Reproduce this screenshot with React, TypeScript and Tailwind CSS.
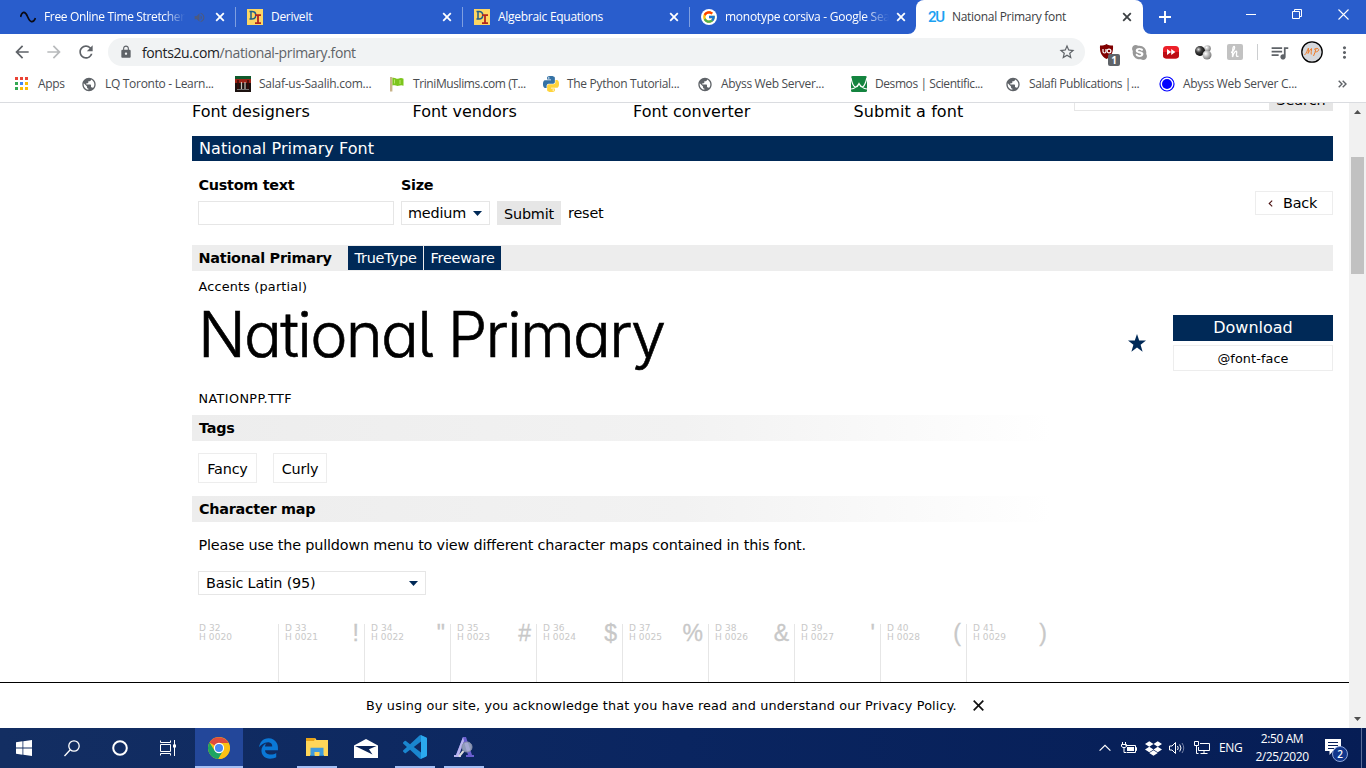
import React from "react";
import { FcGoogle } from "react-icons/fc";
import {
  MdPublic,
  MdQueueMusic,
  MdMoreVert,
  MdStarBorder,
  MdRefresh,
  MdArrowBack,
  MdArrowForward,
  MdLock,
  MdVolumeUp,
} from "react-icons/md";
import { FaDropbox, FaEdgeLegacy, FaSkype } from "react-icons/fa";

/* ---------- favicons and browser icons ---------- */

function CloseX({ dark = false }: { dark?: boolean }) {
  return (
    <svg width="10" height="10" viewBox="0 0 10 10" className="shrink-0">
      <path d="M1.2 1.2l7.6 7.6M8.8 1.2L1.2 8.8" stroke={dark ? "#3c4043" : "#fff"} strokeWidth="1.8" />
    </svg>
  );
}

function Wave() {
  return (
    <svg width="16" height="16" viewBox="0 0 16 16">
      <path d="M.5 8C2 2.500 5 1.500 7.500 7.500S13 14.500 15.500 9" fill="none" stroke="#0a0a14" strokeWidth="1.700" />
    </svg>
  );
}

function DeriveIcon() {
  return (
    <svg width="16" height="16" viewBox="0 0 16 16">
      <rect width="16" height="16" fill="#fdd663" />
      <path d="M2.500 2.500h2.500c5 0 5 7.500 0 7.500H2.500M4 2.500V10" fill="none" stroke="#1f5f8b" strokeWidth="1.5" />
      <path d="M8 6.200h6M11 6.200v8M8 14.200h6" fill="none" stroke="#b3261e" strokeWidth="1.8" />
    </svg>
  );
}

function GoogleIcon() {
  return (
    <span className="flex size-4 items-center justify-center rounded-full bg-white">
      <FcGoogle size={14} />
    </span>
  );
}

function PythonIcon() {
  const half =
    "M14.25.18l.9.2.73.26.59.3.45.32.34.34.25.34.16.33.1.3.04.26.02.2-.01.13V8.500l-.05.63-.13.55-.21.46-.26.38-.3.31-.33.25-.35.19-.35.14-.33.1-.3.07-.26.04-.21.02H8.770l-.69.05-.59.14-.5.22-.41.27-.33.32-.27.35-.2.36-.15.37-.1.35-.07.32-.04.27-.02.21v3.060H3.170l-.21-.03-.28-.07-.32-.12-.35-.18-.36-.26-.36-.36-.35-.46-.32-.59-.28-.73-.21-.88-.14-1.050-.05-1.230.06-1.220.16-1.040.24-.87.32-.71.36-.57.4-.44.42-.33.42-.24.4-.16.36-.1.32-.05.24-.01h.16l.06.01h8.160v-.83H6.180l-.01-2.750-.02-.37.05-.34.11-.31.17-.28.25-.26.31-.23.38-.2.44-.18.51-.15.58-.12.64-.1.71-.06.77-.04.84-.02 1.270.05zm-6.300 1.980l-.23.33-.08.41.08.41.23.34.33.22.41.09.41-.09.33-.22.23-.34.08-.41-.08-.41-.23-.33-.33-.22-.41-.09-.41.09z";
  return (
    <svg width="16" height="16" viewBox="0 0 24 24">
      <path d={half} fill="#3572a5" />
      <path d={half} fill="#ffd43b" transform="rotate(180 12 12)" />
    </svg>
  );
}

function AppsIcon() {
  const colors = ["#ea4335", "#ea4335", "#ea4335", "#34a853", "#4285f4", "#fbbc05", "#34a853", "#fbbc05", "#fbbc05"];
  return (
    <svg width="16" height="16" viewBox="0 0 16 16">
      {colors.map((c, i) => (
        <rect key={i} x={1 + (i % 3) * 5} y={1 + Math.floor(i / 3) * 5} width="3" height="3" fill={c} />
      ))}
    </svg>
  );
}

function GateIcon() {
  return (
    <svg width="16" height="16" viewBox="0 0 16 16">
      <rect width="16" height="16" fill="#1c1210" />
      <rect width="16" height="3" fill="#0f5a2c" />
      <rect y="3" width="16" height="4" fill="#9c2317" />
      <path d="M3 4v9M13 4v9" stroke="#3b0d08" strokeWidth="1.500" />
      <path d="M6.500 6v7M10 6v7" stroke="#c9c2b8" strokeWidth="1.200" />
      <path d="M2 13.500h12" stroke="#777" />
    </svg>
  );
}

function FlagIcon() {
  return (
    <svg width="16" height="16" viewBox="0 0 16 16">
      <rect x="1" y="1" width="2.400" height="14.500" fill="#c9b48a" />
      <path d="M3.400 2c2.500-1 4 1.500 6.300.6 1.500-.6 3-.8 4.800.2v7c-2-1-3.300-.5-4.800 0C7.500 10.500 6 8.500 3.400 9.500z" fill="#7cc51c" />
      <path d="M5.500 3.500v4M11 4v4" stroke="#b8e66a" />
    </svg>
  );
}

function DesmosIcon() {
  return (
    <svg width="16" height="16" viewBox="0 0 16 16">
      <rect width="16" height="16" rx="1.500" fill="#14843f" />
      <path d="M0 1.500C1 8 3 11 5 11s2-1.500 3-3.500c1 2 1.500 3.500 3 3.500s3.500-3 5-9.500M0 13c3-.3 6-2 8-5.500 2 3.500 5 5.200 8 5.500" fill="none" stroke="#fff" strokeWidth="1.200" />
    </svg>
  );
}

function AbyssIcon() {
  return (
    <svg width="16" height="16" viewBox="0 0 16 16">
      <circle cx="8" cy="8" r="7" fill="none" stroke="#00f" strokeWidth="1.200" />
      <circle cx="8" cy="8" r="5" fill="#00f" />
    </svg>
  );
}

function Globe() {
  return <MdPublic size={17} color="#5f6368" />;
}

function UblockIcon() {
  return (
    <span className="relative block size-4">
      <svg width="16" height="16" viewBox="0 0 16 16">
        <path d="M1 1.500C4 1.500 6 1 7.500 0 9 1 11 1.500 14 1.500 14.500 8 12.500 12.500 7.500 15 2.500 12.500.5 8 1 1.500z" fill="#800000" />
        <path d="M4 5v2.500q0 1.500 1.500 1.500T7 7.500V5" fill="none" stroke="#fff" strokeWidth="1.200" />
        <circle cx="10" cy="7" r="1.900" fill="none" stroke="#fff" strokeWidth="1.200" />
      </svg>
      <span className="absolute top-[10px] left-[9px] flex h-3 w-3 items-center justify-center rounded-xs bg-[#5f6368] text-[10px] font-bold text-white">
        1
      </span>
    </span>
  );
}

function SkypeIcon() {
  return <FaSkype size={17} color="#989898" />;
}

function FastForwardIcon() {
  return (
    <svg width="16" height="16" viewBox="0 0 16 16">
      <rect y="2" width="16" height="12.500" rx="3.500" fill="#ec2029" />
      <path d="M0 8h16v3a3.500 3.500 0 0 1-3.500 3.500h-9A3.500 3.500 0 0 1 0 11z" fill="#bd0d14" />
      <path d="M4 5l4.200 3L4 11zM8.200 5l4.200 3-4.200 3z" fill="#fff" />
    </svg>
  );
}

function BallsIcon() {
  return (
    <svg width="18" height="16" viewBox="0 0 18 16">
      <defs>
        <radialGradient id="ballDark" cx=".35" cy=".35" r=".7">
          <stop offset="0" stopColor="#ddd" />
          <stop offset=".4" stopColor="#444" />
          <stop offset="1" stopColor="#000" />
        </radialGradient>
        <radialGradient id="ballLight" cx=".35" cy=".35" r=".7">
          <stop offset="0" stopColor="#fff" />
          <stop offset="1" stopColor="#777" />
        </radialGradient>
      </defs>
      <circle cx="13.500" cy="4.500" r="3.300" fill="url(#ballLight)" />
      <circle cx="6" cy="7" r="5" fill="url(#ballDark)" />
      <circle cx="13" cy="11" r="4.500" fill="url(#ballLight)" />
    </svg>
  );
}

function HoneyIcon() {
  return (
    <svg width="16" height="16" viewBox="0 0 16 16">
      <rect width="16" height="16" rx="2" fill="#c2c2c2" />
      <path d="M4 8.500C7 8 8.500 2.500 7 2.500S5.500 8 5.500 13C6.500 8 10 5.500 9.700 8.500 9.300 11 9 13.500 11.500 12" fill="none" stroke="#fff" strokeWidth="1.300" />
    </svg>
  );
}

function Avatar() {
  return (
    <svg width="22" height="22" viewBox="0 0 22 22">
      <circle cx="11" cy="11" r="10.200" fill="#d6d8dc" stroke="#000" strokeWidth="1.300" />
      <path d="M3.500 14c2-1 3-6 4-7 .3 2-.5 4-.5 5.500C8.500 10 9.500 8 10.500 7.500c.3 2-.8 4-.2 6M12.500 15c1-2 2-5 2.500-7.500M13 8.500c3-2.500 6-.5 4 1.500-1 1-2.500 1-3 .8" fill="none" stroke="#ef7d2b" strokeWidth="1" />
    </svg>
  );
}

/* ---------- browser chrome ---------- */

const tabs = [
  { title: "Free Online Time Stretcher", icon: <Wave />, spacing: "tracking-[-0.35px]", sound: true, fade: true },
  { title: "DeriveIt", icon: <DeriveIcon />, spacing: "tracking-[-0.3px]" },
  { title: "Algebraic Equations", icon: <DeriveIcon />, spacing: "tracking-[-0.28px]" },
  { title: "monotype corsiva - Google Search", icon: <GoogleIcon />, spacing: "tracking-[-0.26px]", fade: true },
];

function TabStrip() {
  return (
    <div className="flex h-[34px] bg-[#295dcc] pl-2 text-[12px] text-white">
      {tabs.map((t, i) => (
        <div
          key={t.title}
          className={`relative flex w-[227px] shrink-0 items-center pl-3 ${i === 3 ? "" : "after:absolute after:top-[7px] after:-right-px after:h-5 after:w-px after:bg-[#7f9fe0]"}`}
        >
          <span className="flex size-4 shrink-0 items-center">{t.icon}</span>
          <span
            className={`ml-2 shrink-0 overflow-hidden whitespace-nowrap ${t.spacing} ${t.sound ? "w-[141px]" : "w-[164px]"} ${t.fade ? "[mask-image:linear-gradient(to_right,black_85%,transparent)]" : ""}`}
          >
            {t.title}
          </span>
          {t.sound && <MdVolumeUp size={13} color="#4c5a80" className="ml-[8px] shrink-0" />}
          <span className={t.sound ? "ml-[9px] flex" : "ml-[7px] flex"}>
            <CloseX />
          </span>
        </div>
      ))}
      <div className="relative flex w-[227px] shrink-0 items-center rounded-t-lg bg-white pl-3 text-[#3c4043]">
        <svg className="absolute bottom-0 -left-2" width="8" height="8" viewBox="0 0 8 8">
          <path d="M8 0a8 8 0 0 1-8 8h8z" fill="#fff" />
        </svg>
        <svg className="absolute -right-2 bottom-0" width="8" height="8" viewBox="0 0 8 8">
          <path d="M0 0a8 8 0 0 0 8 8H0z" fill="#fff" />
        </svg>
        <span className="w-4 shrink-0 font-[Roboto] text-[15px] font-medium tracking-[-1.2px] text-[#1ba1f2]">2U</span>
        <span className="ml-2 w-[165px] tracking-[-0.3px] whitespace-nowrap">National Primary font</span>
        <span className="ml-[5px] flex">
          <CloseX dark />
        </span>
      </div>
      <div className="ml-4 flex items-center">
        <svg width="12" height="12" viewBox="0 0 12 12">
          <path d="M6 0v12M0 6h12" stroke="#fff" strokeWidth="1.900" />
        </svg>
      </div>
      <div className="ml-auto flex items-start gap-9 pt-[9px] pr-[17px]">
        <svg width="10" height="11" viewBox="0 0 10 11">
          <path d="M0 5.500h10" stroke="#fff" />
        </svg>
        <svg width="10" height="10" viewBox="0 0 10 10">
          <path d="M.5 2.500h7v7h-7zM2.500 2.500v-2h7v7h-2" fill="none" stroke="#fff" />
        </svg>
        <svg width="11" height="11" viewBox="0 0 11 11">
          <path d="M.5.5l10 10M10.500.5l-10 10" stroke="#fff" strokeWidth="1.100" />
        </svg>
      </div>
    </div>
  );
}

function Toolbar() {
  return (
    <div className="flex h-9 items-center bg-white text-[#5f6368]">
      <div className="flex w-[108px] items-center gap-[12px] pl-3">
        <MdArrowBack size={20} />
        <MdArrowForward size={20} color="#b8babc" />
        <MdRefresh size={20} />
      </div>
      <div className="flex h-7 w-[977px] items-center rounded-full bg-[#f1f3f4] pr-[9px] pl-[11px]">
        <MdLock size={14} />
        <span className="ml-[9px] text-[14px] tracking-[-0.38px] text-[#5f6368]">
          <span className="text-[#202124]">fonts2u.com</span>/national-primary.font
        </span>
        <MdStarBorder size={18} className="ml-auto" />
      </div>
      <div className="flex items-center pl-[6px]">
        <span className="flex w-8 justify-center"><UblockIcon /></span>
        <span className="flex w-8 justify-center"><SkypeIcon /></span>
        <span className="flex w-8 justify-center"><FastForwardIcon /></span>
        <span className="flex w-8 justify-center"><BallsIcon /></span>
        <span className="flex w-8 justify-center"><HoneyIcon /></span>
        <span className="ml-[6px] h-4 w-px bg-[#ccced0]" />
        <span className="ml-[11px]"><MdQueueMusic size={21} /></span>
        <span className="ml-[11px]"><Avatar /></span>
        <span className="ml-[12px]"><MdMoreVert size={19} /></span>
      </div>
    </div>
  );
}

const bookmarks = [
  { label: "LQ Toronto - Learn...", icon: <Globe />, spacing: "tracking-[-0.3px]" },
  { label: "Salaf-us-Saalih.com...", icon: <GateIcon />, spacing: "tracking-[-0.25px]" },
  { label: "TriniMuslims.com (T...", icon: <FlagIcon />, spacing: "tracking-[-0.4px]" },
  { label: "The Python Tutorial...", icon: <PythonIcon />, spacing: "tracking-[-0.3px]" },
  { label: "Abyss Web Server...", icon: <Globe />, spacing: "tracking-[-0.32px]" },
  { label: "Desmos | Scientific...", icon: <DesmosIcon />, spacing: "tracking-[-0.42px]" },
  { label: "Salafi Publications |...", icon: <Globe />, spacing: "tracking-[-0.42px]" },
  { label: "Abyss Web Server C...", icon: <AbyssIcon />, spacing: "tracking-[-0.28px]" },
];

function BookmarkBar() {
  return (
    <div className="flex h-[33px] border-b border-[#dadce0] bg-white pb-[4px] pl-[14px] text-[12px] text-[#494c50]">
      <div className="flex w-[67px] shrink-0 items-center gap-2 tracking-[-0.3px]">
        <AppsIcon />
        Apps
      </div>
      {bookmarks.map((b) => (
        <div key={b.label} className="flex w-[154px] shrink-0 items-center gap-2">
          <span className="flex size-4 shrink-0 items-center justify-center">{b.icon}</span>
          <span className={`whitespace-nowrap ${b.spacing}`}>{b.label}</span>
        </div>
      ))}
      <div className="ml-[25px] flex items-center">
        <svg width="9" height="8" viewBox="0 0 9 8">
          <path d="M.7.7L4 4 .7 7.300M4.700.7L8 4 4.700 7.300" fill="none" stroke="#5f6368" strokeWidth="1.400" />
        </svg>
      </div>
    </div>
  );
}

/* ---------- page ---------- */

function Caret() {
  return (
    <svg width="9" height="5" viewBox="0 0 9 5">
      <path d="M0 0h9L4.500 5z" fill="#002957" />
    </svg>
  );
}

function SectionTitle({ children }: { children: React.ReactNode }) {
  return (
    <h2 className="h-[26px] w-[860px] bg-linear-to-r from-[#ededed] via-[#f2f2f2] via-57% to-white pl-[7px] text-[14.400px] leading-[26px] font-bold tracking-[-0.26px]">
      {children}
    </h2>
  );
}

const glyphs = ["", "!", '"', "#", "$", "%", "&", "'", "(", ")"];

function CharacterMap() {
  return (
    <div className="flex h-[60px] w-[860px] tracking-normal text-[#c8c8c8]">
      {glyphs.map((g, i) => (
        <div
          key={i}
          className={`flex h-full w-[86px] justify-between pr-[5px] ${i === 0 ? "pl-[7px]" : "border-l border-[#e6e6e6] pl-[6px]"}`}
        >
          <div className="text-[9px] leading-[9px] tracking-[0.1px] whitespace-nowrap">
            D {32 + i}
            <br />
            H 00{20 + i}
          </div>
          <div className="font-['Liberation_Sans'] text-[23px] leading-[18px] [-webkit-text-stroke:0.300px_#c8c8c8]">{g}</div>
        </div>
      ))}
    </div>
  );
}

function Page() {
  return (
    <main className="h-[579px] w-[1349px] overflow-hidden bg-white pl-[192px] font-['DejaVu_Sans',Verdana,sans-serif] text-[14.400px] tracking-[-0.18px] text-black">
      <div className="w-[1141px]">
        <nav className="flex h-[33px] items-start text-[16px] leading-[17px] tracking-normal">
          <a className="w-[220.500px]">Font designers</a>
          <a className="w-[220.500px]">Font vendors</a>
          <a className="w-[220.500px]">Font converter</a>
          <a className="w-[220.500px] tracking-[0.1px]">Submit a font</a>
          <div className="flex h-2 w-[259px] overflow-hidden">
            <div className="flex-1 border-b border-l border-[#e6e6e6]" />
            <div className="flex w-16 items-end justify-center overflow-hidden bg-[#e6e6e6]">
              <span className="mb-[2px] text-[14.400px] leading-[18px]">Search</span>
            </div>
          </div>
        </nav>

        <h1 className="h-[25px] bg-[#002957] pl-[7px] text-[16px] leading-[25px] tracking-[0.08px] text-white">National Primary Font</h1>

        <form className="flex h-[84px] items-start pl-[6px]">
          <div className="w-[203px] pt-[14px]">
            <div className="pl-[0.500px] leading-5 font-bold tracking-[-0.27px]">Custom text</div>
            <div className="mt-[6px] h-6 w-[196px] border border-[#e6e6e6]" />
          </div>
          <div className="w-[96px] pt-[14px]">
            <div className="leading-5 font-bold tracking-[-0.27px]">Size</div>
            <div className="mt-[6px] flex h-6 w-[89px] items-center justify-between border border-[#e6e6e6] pr-[7px] pl-[6px]">
              <span className="pt-[2px]">medium</span>
              <Caret />
            </div>
          </div>
          <div className="mt-10 h-6 w-16 bg-[#e6e6e6] text-center leading-[26px]">Submit</div>
          <div className="mt-10 ml-[7px] leading-6">reset</div>
          <div className="mt-[30px] ml-auto flex h-6 w-[78px] items-center border border-[#ededed] pl-[12px]">
            <svg width="5" height="7" viewBox="0 0 5 7" className="mt-px">
              <path d="M4.200.6L1.200 3.500l3 2.900" fill="none" stroke="#4a1010" strokeWidth="1.100" />
            </svg>
            <span className="ml-[10px] pt-[2px]">Back</span>
          </div>
        </form>

        <div className="flex h-[26px] items-center bg-[#ededed] pl-[6px]">
          <span className="w-[150px] pt-px pl-[0.500px] font-bold tracking-[-0.25px]">National Primary</span>
          <span className="mr-px h-6 w-[75px] bg-[#002957] text-center leading-6 text-white">TrueType</span>
          <span className="h-6 w-[77px] bg-[#002957] text-center leading-6 text-white">Freeware</span>
        </div>

        <div className="flex h-[144px]">
          <div className="w-[930px] pl-[6px]">
            <div className="pt-[6px] pl-[0.500px] text-[12.800px] leading-5 tracking-[0.19px]">Accents (partial)</div>
            <div className="-mt-[2px] h-[87px] font-['Inter'] text-[63px] leading-[79px] font-light tracking-[-1.780px] whitespace-nowrap [-webkit-text-stroke:0.600px_black] [font-feature-settings:'cv11','cv05']">
              National Primary
            </div>
            <div className="pt-[7px] pl-[0.500px] text-[12.800px] leading-5 tracking-[0.38px]">NATIONPP.TTF</div>
          </div>
          <div className="w-[51px] pt-[63px] pl-[6px]">
            <svg width="18" height="18" viewBox="0 0 18 18">
              <path d="M9 0l2.200 6.500H18l-5.400 4.200 2 7L9 13.600l-5.600 4.100 2-7L0 6.500h6.800z" fill="#002957" />
            </svg>
          </div>
          <div className="flex w-[160px] flex-col gap-1 pt-[44px] text-center">
            <div className="h-[26px] bg-[#002957] text-[16px] leading-[26px] tracking-normal text-white">Download</div>
            <div className="h-[26px] border border-[#ededed] text-[12.800px] leading-[25px] tracking-[0.1px]">@font-face</div>
          </div>
        </div>

        <SectionTitle>Tags</SectionTitle>
        <div className="flex h-[55px] items-start gap-4 pt-3 pl-[6px]">
          <span className="h-[30px] w-[59px] border border-[#ededed] text-center leading-[30px]">Fancy</span>
          <span className="h-[30px] w-[54px] border border-[#ededed] text-center leading-[30px]">Curly</span>
        </div>
        <SectionTitle>Character map</SectionTitle>
        <p className="pt-[13px] pl-[6.500px] leading-5">
          Please use the pulldown menu to view different character maps contained in this font.
        </p>
        <div className="mt-4 mb-[29px] ml-[6px] flex h-6 w-[228px] items-center justify-between border border-[#e6e6e6] pr-[7px] pl-[7px]">
          <span className="pt-[2px]">Basic Latin (95)</span>
          <Caret />
        </div>
        <CharacterMap />
      </div>
    </main>
  );
}

function Scrollbar() {
  return (
    <div className="flex w-[17px] flex-col items-center bg-[#f1f1f1]">
      <svg width="17" height="17" viewBox="0 0 17 17">
        <path d="M5 11l3.500-4 3.500 4z" fill="#505050" />
      </svg>
      <div className="mt-[37px] h-[117px] w-[13px] bg-[#c1c1c1]" />
      <svg className="mt-auto" width="17" height="17" viewBox="0 0 17 17">
        <path d="M5 6l3.500 4L12 6z" fill="#505050" />
      </svg>
    </div>
  );
}

function CookieNotice() {
  return (
    <div className="flex h-[46px] items-center border-t border-black bg-white pl-[366px] font-['DejaVu_Sans',Verdana,sans-serif] text-[12.800px] text-black">
      <span className="tracking-[0.15px] whitespace-nowrap">
        By using our site, you acknowledge that you have read and understand our Privacy Policy.
      </span>
      <svg className="ml-4" width="11" height="11" viewBox="0 0 11 11">
        <path d="M.7.7l9.600 9.600M10.300.7L.7 10.300" stroke="#111" strokeWidth="1.700" />
      </svg>
    </div>
  );
}

/* ---------- taskbar ---------- */

function ChromeLogo() {
  return (
    <svg width="22" height="22" viewBox="0 0 24 24">
      <circle cx="12" cy="12" r="12" fill="#fbc116" />
      <path d="M12 12L1.600 6A12 12 0 0 1 22.400 6.500H12z" fill="#dd4b3e" />
      <path d="M1.600 6A12 12 0 0 0 11.300 24L16.800 14.700 7.200 14.700z" fill="#1da462" />
      <path d="M12 6.500h10.400A12 12 0 0 1 11.300 24l5.500-9.300z" fill="#fbc116" />
      <circle cx="12" cy="12" r="5.600" fill="#fff" />
      <circle cx="12" cy="12" r="4.400" fill="#4688f4" />
    </svg>
  );
}

function FolderIcon() {
  return (
    <svg width="22" height="18" viewBox="0 0 22 18">
      <path d="M0 0h9l1.500 2H22v16H0z" fill="#ffd659" />
      <path d="M0 0h9.500L8 3H0z" fill="#e8a318" />
      <path d="M4.500 9.800h13V18h-4v-4h-5v4h-4z" fill="#3f9bdc" />
      <path d="M4 18h4.500v-1H4zM13.500 18H18v-1h-4.500z" fill="#2b86c9" />
    </svg>
  );
}

function MailIcon() {
  return (
    <svg width="24" height="19" viewBox="0 0 24 19">
      <path d="M0 6.500L12 0l12 6.500V19H0z" fill="#fff" />
      <path d="M1 7h21.500L15 10.200l3.500 5.300z" fill="#0a2357" />
    </svg>
  );
}

function CodeIcon() {
  return (
    <svg width="24" height="24" viewBox="0 0 24 24">
      <path
        d="M23.150 2.587L18.210.21a1.494 1.494 0 0 0-1.705.29l-9.460 8.630-4.120-3.128a.999.999 0 0 0-1.276.057L.327 7.261A1 1 0 0 0 .326 8.740L3.899 12 .326 15.260a1 1 0 0 0 .001 1.479L1.650 17.940a.999.999 0 0 0 1.276.057l4.120-3.128 9.460 8.630a1.492 1.492 0 0 0 1.704.29l4.942-2.377A1.500 1.500 0 0 0 24 20.060V3.939a1.500 1.500 0 0 0-.85-1.352zm-5.146 14.861L10.826 12l7.178-5.448v10.896z"
        fill="#1a86cf"
      />
      <path d="M18 .3l5.150 2.287A1.500 1.500 0 0 1 24 3.939V20.060a1.500 1.500 0 0 1-.85 1.352L18 23.700z" fill="#2ba9ee" />
    </svg>
  );
}

function FontToolIcon() {
  return (
    <svg width="22" height="22" viewBox="0 0 22 22">
      <path d="M10 1h3l6 18h2v2h-8v-2h2l-4-13-5 13h2v2H1v-2h2z" fill="#6a5fd0" />
      <path d="M10 1l1 4-5 14h2v2H1v-2h2z" fill="#b9b4f0" />
      <circle cx="14" cy="11" r="5" fill="#b8c0d6" fillOpacity=".75" stroke="#8790aa" />
      <path d="M10.500 15L6 20.500" stroke="#ddd" strokeWidth="2" />
    </svg>
  );
}

function TaskbarApps() {
  return (
    <div className="flex">
      <div className="flex w-12 items-center justify-center">
        <svg width="16" height="16" viewBox="0 0 16 16">
          <path d="M0 2.200L6.500 1.300v6.300H0zM7.300 1.200L16 0v7.600H7.300zM0 8.400h6.500v6.300L0 13.800zM7.300 8.400H16V16l-8.700-1.200z" fill="#fff" />
        </svg>
      </div>
      <div className="flex w-12 items-center justify-center">
        <svg width="16" height="17" viewBox="0 0 16 17">
          <circle cx="10" cy="6" r="5.200" fill="none" stroke="#fff" strokeWidth="1.300" />
          <path d="M6.300 9.800L.5 16" stroke="#fff" strokeWidth="1.300" />
        </svg>
      </div>
      <div className="flex w-12 items-center justify-center">
        <svg width="16" height="16" viewBox="0 0 16 16">
          <circle cx="8" cy="8" r="6.800" fill="none" stroke="#fff" strokeWidth="2" />
        </svg>
      </div>
      <div className="flex w-12 items-center justify-center">
        <svg width="17" height="16" viewBox="0 0 17 16">
          <path d="M.5.500v2h10v-2M.5 4.500h10v7H.5zM.5 15.500v-2h10v2M14.500 0v16" fill="none" stroke="#fff" />
          <rect x="13" y="4.500" width="3" height="3" fill="#fff" />
        </svg>
      </div>
      <div className="ml-[3px] flex w-12 items-center justify-center border-b-2 border-[#a4bff5] bg-[#23479a] pt-[2px]">
        <ChromeLogo />
      </div>
      <div className="ml-px flex w-12 items-center justify-center">
        <FaEdgeLegacy size={21} color="#0a78d7" />
      </div>
      <div className="ml-[5px] flex w-10 items-center justify-center border-b-2 border-[#a4bff5]">
        <FolderIcon />
      </div>
      <div className="ml-[5px] flex w-12 items-center justify-center">
        <MailIcon />
      </div>
      <div className="ml-[5px] flex w-10 items-center justify-center border-b-2 border-[#a4bff5]">
        <CodeIcon />
      </div>
      <div className="ml-[9px] flex w-10 items-center justify-center border-b-2 border-[#a4bff5]">
        <FontToolIcon />
      </div>
    </div>
  );
}

function Tray() {
  return (
    <div className="ml-auto flex items-center pr-1 text-[12px] text-white">
      <svg width="12" height="8" viewBox="0 0 12 8">
        <path d="M.6 6.700L6 1.300l5.400 5.400" fill="none" stroke="#fff" strokeWidth="1.200" />
      </svg>
      <svg className="ml-[10px]" width="16" height="12" viewBox="0 0 16 12">
        <path d="M4.500 3.500h10v7h-9M14.500 5.500h1v3h-1M1.500 0v3M4.500 0v3M.5 2.500h5v2l-1.500 1H2L.5 4.500zM3 5.500v5h2" fill="none" stroke="#fff" />
        <rect x="6" y="5" width="7" height="4" fill="#fff" />
      </svg>
      <FaDropbox size={17} className="ml-[8px]" />
      <svg className="ml-[7px]" width="17" height="14" viewBox="0 0 17 14">
        <path d="M.5 5h2.500l3.500-3.500v11L3 9H.5z" fill="none" stroke="#fff" />
        <path d="M8.500 5q1.500 2 0 4M10.700 3.500q2.600 3.500 0 7" fill="none" stroke="#fff" />
        <path d="M13 2q3.500 5 0 10" fill="none" stroke="#7784a8" />
      </svg>
      <svg className="ml-[8px]" width="17" height="14" viewBox="0 0 17 14">
        <path d="M6 2.500h9.500v7h-11V6M10 9.500v3M6.500 12.500h7M.5.500h4v4h-4zM2.500 4.500v8h2" fill="none" stroke="#fff" />
      </svg>
      <span className="ml-[8px] w-6 tracking-[-0.3px]">ENG</span>
      <div className="ml-[9px] w-[60px] text-center leading-[18px] tracking-[-0.4px] whitespace-nowrap">
        2:50 AM
        <br />
        2/25/2020
      </div>
      <div className="relative ml-[13px] h-[26px] w-[26px]">
        <svg width="16" height="18" viewBox="0 0 16 18" className="mt-[4px]">
          <path d="M0 0h16v12H8l-3.500 4v-4H0z" fill="#fff" />
          <path d="M3 3.500h10M3 6.500h10M3 9.500h6" stroke="#08205a" />
        </svg>
        <span className="absolute top-[11px] left-[7px] flex size-4 items-center justify-center rounded-full border border-[#8ea6d8] bg-[#10368c] text-[10px] font-semibold">
          2
        </span>
      </div>
      <span className="ml-[10px] h-10 w-px bg-[#5a6c98]" />
    </div>
  );
}

export default function App() {
  return (
    <div className="flex h-[768px] w-[1366px] flex-col overflow-hidden font-['Open_Sans','Noto_Sans',sans-serif]">
      <TabStrip />
      <Toolbar />
      <BookmarkBar />
      <div className="flex h-[625px]">
        <div className="w-[1349px]">
          <Page />
          <CookieNotice />
        </div>
        <Scrollbar />
      </div>
      <div className="flex h-10 bg-linear-to-r from-[#132e62] via-[#0a2560] to-[#061d55]">
        <TaskbarApps />
        <Tray />
      </div>
    </div>
  );
}
